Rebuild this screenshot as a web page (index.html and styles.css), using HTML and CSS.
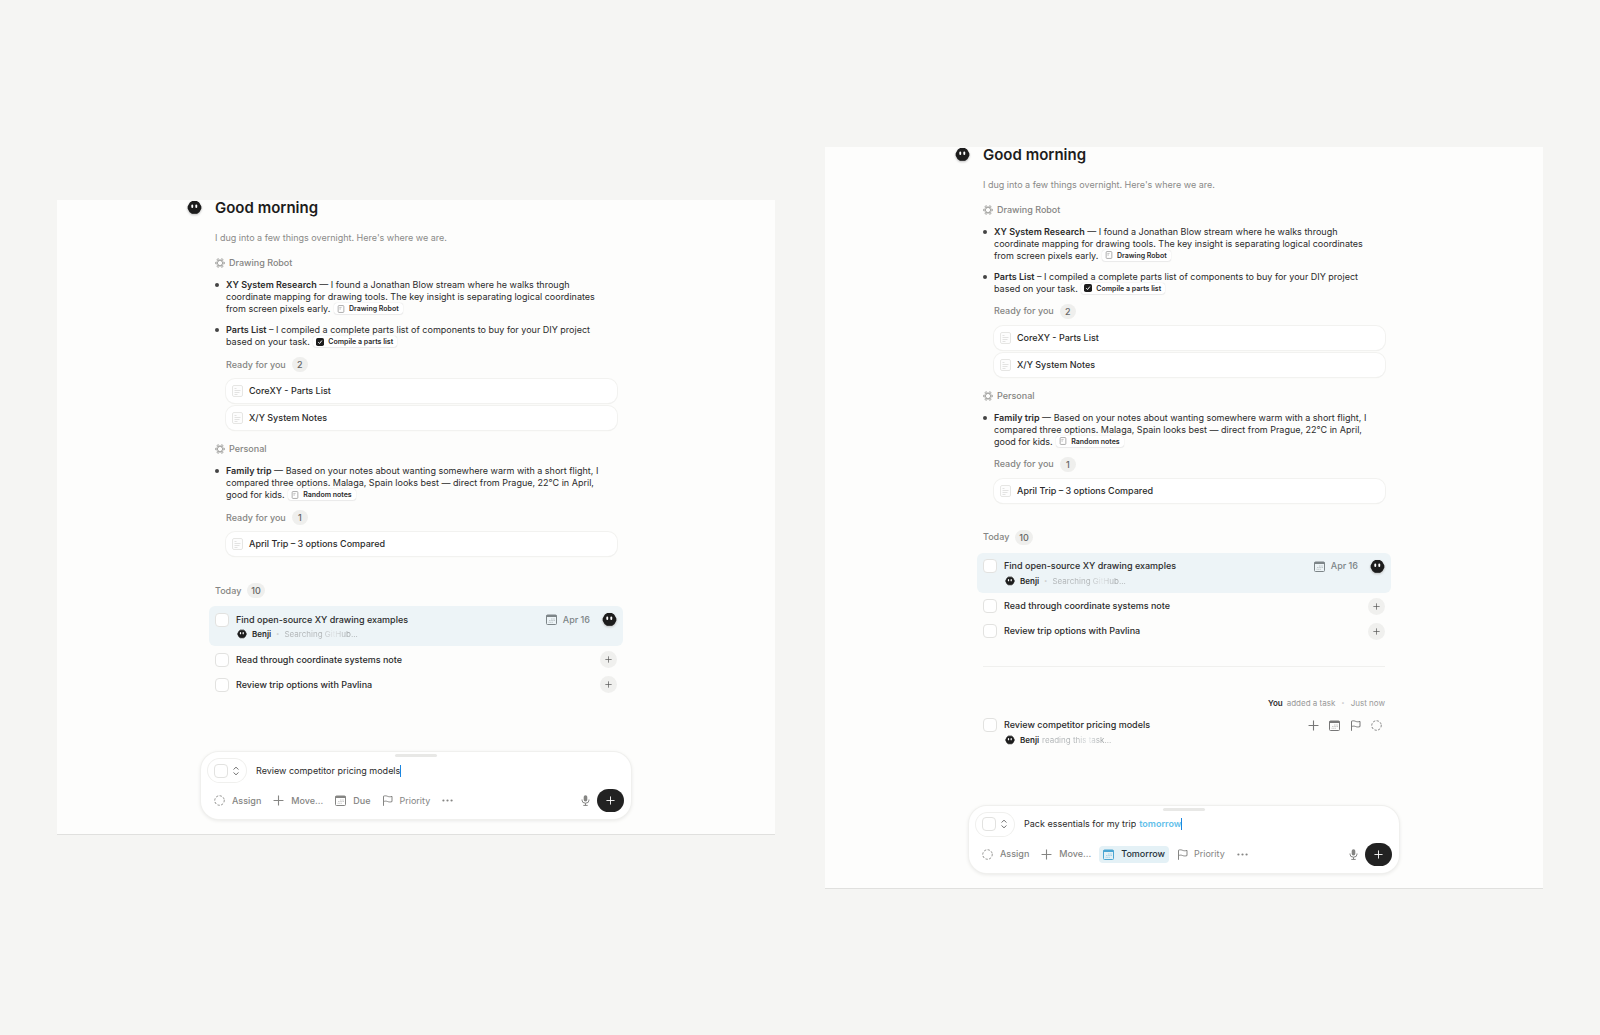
FILE: index.html
```html
<!DOCTYPE html>
<html lang="en">
<head>
    <meta charset="UTF-8">
    <meta name="viewport" content="width=device-width, initial-scale=1.0">
    <title>Good morning</title>
    <link rel="stylesheet" href="styles.css">
</head>
<body>

<!-- shared icons -->
<svg class="sprite" aria-hidden="true">
    <symbol id="i-benji" viewBox="0 0 16 16">
        <path d="M5.500 1.800h5l2 1.400L14.600 7v2l-2 3.600-2.100 1.400h-5l-2.100-1.400L1.400 9V7l2.100-3.800z" fill="#1d1d1d" stroke="#1d1d1d" stroke-width="1.400" stroke-linejoin="round"/>
        <rect x="4.600" y="4.800" width="2" height="3.600" rx="1" fill="#fff"/>
        <rect x="8.900" y="4.800" width="2" height="3.600" rx="1" fill="#fff"/>
    </symbol>
    <symbol id="i-project" viewBox="0 0 16 16">
        <g fill="none" stroke="currentColor" stroke-width="1.300">
            <circle cx="8" cy="8" r="4.200"/>
            <circle cx="5" cy="2.900" r="1.700"/>
            <circle cx="11" cy="2.900" r="1.700"/>
            <circle cx="14" cy="8" r="1.500"/>
            <circle cx="11" cy="13.100" r="1.700"/>
            <circle cx="5" cy="13.100" r="1.700"/>
            <circle cx="2" cy="8" r="1.500"/>
        </g>
    </symbol>
    <symbol id="i-note" viewBox="0 0 12 14">
        <rect x="1" y="1" width="10" height="12" rx="1.500" fill="#fff" stroke="currentColor" stroke-width="1.400"/>
        <path d="M3 4.500h4M3 7h3" fill="none" stroke="currentColor"/>
    </symbol>
    <symbol id="i-doc" viewBox="0 0 11 12">
        <rect x=".5" y=".5" width="10" height="11" rx="1.500" fill="#fdfdfd" stroke="#e6e6e4"/>
        <path d="M2.500 3.500h2M2.500 5.500h6M2.500 7.500h5M2.500 9.500h3" fill="none" stroke="#dcdcda" stroke-width=".8"/>
    </symbol>
    <symbol id="i-done" viewBox="0 0 9 9">
        <rect width="9" height="9" rx="2" fill="#1d1d1d"/>
        <path d="M2.500 4.700l1.500 1.500 2.600-3.300" fill="none" stroke="#fff" stroke-width="1.100"/>
    </symbol>
    <symbol id="i-calendar" viewBox="0 0 11 11">
        <rect x=".5" y="1" width="10" height="9.500" rx="1" fill="none" stroke="currentColor"/>
        <path d="M.5 2h10" stroke="currentColor" stroke-width="2"/>
        <path d="M5 5h4M3 6.500h6M2.500 8.300h4.500" stroke="currentColor" stroke-width=".8" stroke-dasharray="1.200 .4" opacity=".5"/>
    </symbol>
    <symbol id="i-flag" viewBox="0 0 11 11">
        <path d="M1.500 10.800V1.200c1.500-.6 2.800-.4 4 .1s2.700.7 4.500.1v5.200c-1.800.6-3.200.4-4.500-.1s-2.500-.5-4 .1" fill="none" stroke="currentColor"/>
    </symbol>
    <symbol id="i-assign" viewBox="0 0 12 12">
        <circle cx="6" cy="6" r="5.200" fill="none" stroke="currentColor" stroke-width="1" stroke-linecap="round" stroke-dasharray="1.600 2.480"/>
    </symbol>
    <symbol id="i-plus" viewBox="0 0 10 10">
        <path d="M5 .5v9M.5 5h9" fill="none" stroke="currentColor"/>
    </symbol>
    <symbol id="i-sort" viewBox="0 0 8 10">
        <path d="M1.500 3.500L4 1.200l2.500 2.300M1.500 6.500L4 8.800l2.500-2.300" fill="none" stroke="currentColor"/>
    </symbol>
    <symbol id="i-mic" viewBox="0 0 9 11">
        <rect x="2.700" y=".2" width="3.600" height="6.300" rx="1.800" fill="currentColor"/>
        <path d="M1 4.500v.7a3.500 3 0 0 0 7 0v-.7M4.500 8.200v2.300M2.300 10.400h4.400" fill="none" stroke="currentColor" stroke-width="1"/>
    </symbol>
    <symbol id="i-more" viewBox="0 0 10 4">
        <g fill="currentColor">
            <circle cx="1.300" cy="2" r="1"/>
            <circle cx="5" cy="2" r="1"/>
            <circle cx="8.700" cy="2" r="1"/>
        </g>
    </symbol>
</svg>

<main class="board">

    <!-- before adding a task -->
    <section class="panel">
        <div class="feed">
            <header class="greeting">
                <svg class="avatar greeting-avatar"><use href="#i-benji"/></svg>
                <h1>Good morning</h1>
            </header>
            <p class="intro">I dug into a few things overnight. Here's where we are.</p>

            <h2 class="project"><svg><use href="#i-project"/></svg>Drawing Robot</h2>
            <ul class="updates">
                <li><strong>XY System Research</strong> — I found a Jonathan Blow stream where he walks through coordinate mapping for drawing tools. The key insight is separating logical coordinates from screen pixels early. <a class="chip" href="#"><svg><use href="#i-note"/></svg>Drawing Robot</a></li>
                <li><strong>Parts List</strong> – I compiled a complete parts list of components to buy for your DIY project based on your task. <a class="chip" href="#"><svg><use href="#i-done"/></svg>Compile a parts list</a></li>
            </ul>
            <div class="ready">
                <h3 class="label">Ready for you <span class="count">2</span></h3>
                <a class="card" href="#"><svg><use href="#i-doc"/></svg>CoreXY - Parts List</a>
                <a class="card" href="#"><svg><use href="#i-doc"/></svg>X/Y System Notes</a>
            </div>

            <h2 class="project"><svg><use href="#i-project"/></svg>Personal</h2>
            <ul class="updates">
                <li><strong>Family trip</strong> — Based on your notes about wanting somewhere warm with a short flight, I compared three options. Malaga, Spain looks best — direct from Prague, 22°C in April, good for kids. <a class="chip" href="#"><svg><use href="#i-note"/></svg>Random notes</a></li>
            </ul>
            <div class="ready">
                <h3 class="label">Ready for you <span class="count">1</span></h3>
                <a class="card" href="#"><svg><use href="#i-doc"/></svg>April Trip – 3 options Compared</a>
            </div>

            <h3 class="label today">Today <span class="count">10</span></h3>
            <div class="task active">
                <div class="task-row">
                    <input type="checkbox" id="a1">
                    <label for="a1">Find open-source XY drawing examples</label>
                    <span class="due"><svg><use href="#i-calendar"/></svg>Apr 16</span>
                    <svg class="avatar"><use href="#i-benji"/></svg>
                </div>
                <p class="status"><svg class="mini"><use href="#i-benji"/></svg><b>Benji</b><i>•</i><span class="shimmer">Searching GitHub...</span></p>
            </div>
            <div class="task">
                <div class="task-row">
                    <input type="checkbox" id="a2">
                    <label for="a2">Read through coordinate systems note</label>
                    <button class="add" aria-label="Assign"><svg><use href="#i-plus"/></svg></button>
                </div>
            </div>
            <div class="task">
                <div class="task-row">
                    <input type="checkbox" id="a3">
                    <label for="a3">Review trip options with Pavlina</label>
                    <button class="add" aria-label="Assign"><svg><use href="#i-plus"/></svg></button>
                </div>
            </div>
        </div>

        <form class="composer">
            <span class="handle"></span>
            <div class="entry">
                <button type="button" class="type" aria-label="Type"><span class="box"></span><svg><use href="#i-sort"/></svg></button>
                <input type="text" aria-label="New task" value="Review competitor pricing models"><span class="caret"></span>
            </div>
            <div class="tools">
                <button type="button"><svg><use href="#i-assign"/></svg>Assign</button>
                <button type="button"><svg><use href="#i-plus"/></svg>Move...</button>
                <button type="button"><svg><use href="#i-calendar"/></svg>Due</button>
                <button type="button" class="priority"><svg><use href="#i-flag"/></svg>Priority</button>
                <button type="button" aria-label="More"><svg><use href="#i-more"/></svg></button>
                <button type="button" class="mic" aria-label="Dictate"><svg><use href="#i-mic"/></svg></button>
                <button type="button" class="send" aria-label="Add task"><svg><use href="#i-plus"/></svg></button>
            </div>
        </form>
    </section>

    <!-- after adding a task -->
    <section class="panel">
        <div class="feed">
            <header class="greeting">
                <svg class="avatar greeting-avatar"><use href="#i-benji"/></svg>
                <h1>Good morning</h1>
            </header>
            <p class="intro">I dug into a few things overnight. Here's where we are.</p>

            <h2 class="project"><svg><use href="#i-project"/></svg>Drawing Robot</h2>
            <ul class="updates">
                <li><strong>XY System Research</strong> — I found a Jonathan Blow stream where he walks through coordinate mapping for drawing tools. The key insight is separating logical coordinates from screen pixels early. <a class="chip" href="#"><svg><use href="#i-note"/></svg>Drawing Robot</a></li>
                <li><strong>Parts List</strong> – I compiled a complete parts list of components to buy for your DIY project based on your task. <a class="chip" href="#"><svg><use href="#i-done"/></svg>Compile a parts list</a></li>
            </ul>
            <div class="ready">
                <h3 class="label">Ready for you <span class="count">2</span></h3>
                <a class="card" href="#"><svg><use href="#i-doc"/></svg>CoreXY - Parts List</a>
                <a class="card" href="#"><svg><use href="#i-doc"/></svg>X/Y System Notes</a>
            </div>

            <h2 class="project"><svg><use href="#i-project"/></svg>Personal</h2>
            <ul class="updates">
                <li><strong>Family trip</strong> — Based on your notes about wanting somewhere warm with a short flight, I compared three options. Malaga, Spain looks best — direct from Prague, 22°C in April, good for kids. <a class="chip" href="#"><svg><use href="#i-note"/></svg>Random notes</a></li>
            </ul>
            <div class="ready">
                <h3 class="label">Ready for you <span class="count">1</span></h3>
                <a class="card" href="#"><svg><use href="#i-doc"/></svg>April Trip – 3 options Compared</a>
            </div>

            <h3 class="label today">Today <span class="count">10</span></h3>
            <div class="task active">
                <div class="task-row">
                    <input type="checkbox" id="b1">
                    <label for="b1">Find open-source XY drawing examples</label>
                    <span class="due"><svg><use href="#i-calendar"/></svg>Apr 16</span>
                    <svg class="avatar"><use href="#i-benji"/></svg>
                </div>
                <p class="status"><svg class="mini"><use href="#i-benji"/></svg><b>Benji</b><i>•</i><span class="shimmer">Searching GitHub...</span></p>
            </div>
            <div class="task">
                <div class="task-row">
                    <input type="checkbox" id="b2">
                    <label for="b2">Read through coordinate systems note</label>
                    <button class="add" aria-label="Assign"><svg><use href="#i-plus"/></svg></button>
                </div>
            </div>
            <div class="task">
                <div class="task-row">
                    <input type="checkbox" id="b3">
                    <label for="b3">Review trip options with Pavlina</label>
                    <button class="add" aria-label="Assign"><svg><use href="#i-plus"/></svg></button>
                </div>
            </div>

            <hr>
            <p class="activity"><b>You</b><span>added a task</span><i>•</i><span>Just now</span></p>
            <div class="task added">
                <div class="task-row">
                    <input type="checkbox" id="b4">
                    <label for="b4">Review competitor pricing models</label>
                    <div class="actions">
                        <button aria-label="Move"><svg><use href="#i-plus"/></svg></button>
                        <button aria-label="Due"><svg><use href="#i-calendar"/></svg></button>
                        <button aria-label="Priority"><svg><use href="#i-flag"/></svg></button>
                        <button aria-label="Assign"><svg><use href="#i-assign"/></svg></button>
                    </div>
                </div>
                <p class="status"><svg class="mini"><use href="#i-benji"/></svg><b>Benji</b><span class="shimmer">reading this task...</span></p>
            </div>
        </div>

        <form class="composer">
            <span class="handle"></span>
            <div class="entry">
                <button type="button" class="type" aria-label="Type"><span class="box"></span><svg><use href="#i-sort"/></svg></button>
                <input type="text" aria-label="New task" value="Pack essentials for my trip"><span class="date-word">tomorrow</span><span class="caret"></span>
            </div>
            <div class="tools">
                <button type="button"><svg><use href="#i-assign"/></svg>Assign</button>
                <button type="button"><svg><use href="#i-plus"/></svg>Move...</button>
                <button type="button" class="selected"><svg><use href="#i-calendar"/></svg>Tomorrow</button>
                <button type="button" class="priority"><svg><use href="#i-flag"/></svg>Priority</button>
                <button type="button" aria-label="More"><svg><use href="#i-more"/></svg></button>
                <button type="button" class="mic" aria-label="Dictate"><svg><use href="#i-mic"/></svg></button>
                <button type="button" class="send" aria-label="Add task"><svg><use href="#i-plus"/></svg></button>
            </div>
        </form>
    </section>

</main>

</body>
</html>
```
FILE: styles.css
```css
* {
    box-sizing: border-box;
}
body {
    margin: 0;
    background: #f5f5f3;
    color: #2b2b2b;
    font-family: Inter, "Liberation Sans", sans-serif;
    font-size: 9px;
    line-height: 12px;
}
h1, h2, h3, p, ul {
    margin: 0;
    padding: 0;
}
button {
    border: 0;
    padding: 0;
    background: none;
    color: inherit;
    font: inherit;
}
a {
    color: inherit;
    text-decoration: none;
}
svg {
    display: block;
    flex: none;
    width: 11px;
    height: 11px;
}
.sprite {
    position: absolute;
    width: 0;
    height: 0;
}

/* panels */
.board {
    display: flex;
    align-items: center;
    gap: 50px;
    min-height: 100vh;
    padding: 0 57px;
}
.panel {
    flex: 1;
    padding: 0 20px 15px;
    background: #fdfdfc;
    border-bottom: 1px solid #e0e0de;
}
.feed {
    max-width: 402px;
    margin: 0 auto;
}

/* greeting */
.greeting {
    position: relative;
}
.avatar {
    width: 15px;
    height: 15px;
    filter: drop-shadow(0 1px 1px #bbb);
}
.greeting-avatar {
    position: absolute;
    left: -28px;
    top: 0;
}
h1 {
    font-size: 15px;
    line-height: 16px;
    font-weight: 600;
    color: #1d1d1d;
}
.intro {
    margin-top: 16px;
    color: #8a8a88;
}

/* updates */
.project {
    display: flex;
    align-items: center;
    gap: 4px;
    margin: 13px 0 10px;
    font-size: 9px;
    font-weight: 500;
    color: #858583;
}
.project svg {
    width: 10px;
    height: 10px;
    color: #9a9a98;
}
.updates {
    list-style: none;
}
.updates li {
    position: relative;
    padding: 0 9px 0 11px;
}
.updates li + li {
    margin-top: 9px;
}
.updates li::before {
    content: "";
    position: absolute;
    left: 0;
    top: 4px;
    width: 4px;
    height: 4px;
    border-radius: 50%;
    background: #444;
}
strong {
    font-weight: 600;
}
.chip {
    display: inline-flex;
    align-items: center;
    gap: 4px;
    height: 11px;
    margin-left: 1px;
    padding: 0 4px 0 3px;
    border-radius: 3px;
    background: #fff;
    box-shadow: 0 0 1px #ccc, 0 1px 1px #eee;
    font-size: 7px;
    line-height: 11px;
    font-weight: 600;
    vertical-align: top;
}
.chip svg {
    width: 8px;
    height: 8px;
    color: #999;
}
.ready {
    display: flex;
    flex-direction: column;
    gap: 3px;
    margin: 9px 0 13px 11px;
}
.label {
    display: flex;
    align-items: center;
    gap: 6px;
    height: 15px;
    font-size: 9px;
    font-weight: 500;
    color: #858583;
}
.ready .label {
    margin-bottom: 4px;
}
.count {
    min-width: 16px;
    padding: 0 4px;
    border-radius: 8px;
    background: #efefed;
    line-height: 15px;
    text-align: center;
    color: #666;
}
.card {
    display: flex;
    align-items: center;
    gap: 6px;
    height: 24px;
    padding-left: 6px;
    border-radius: 9px;
    background: #fff;
    box-shadow: 0 0 0 1px #f2f2f0, 0 1px 1px #e4e4e2;
    font-weight: 500;
}
.card svg {
    height: 12px;
}

/* tasks */
.today {
    margin: 27px 0 8px;
}
.task {
    margin: 0 -6px;
    padding: 5px 6px;
    border-radius: 6px;
}
.task.active {
    margin-bottom: 1px;
    padding: 6px 6px 7px;
    background: #edf4f7;
}
.task-row {
    display: flex;
    align-items: center;
    height: 15px;
    font-weight: 500;
}
.task-row input, .box {
    appearance: none;
    flex: none;
    width: 14px;
    height: 14px;
    margin: 0 7px 0 0;
    border: 1px solid #e2e2e0;
    border-radius: 4px;
    background: #fff;
}
.task-row label {
    flex: 1;
}
.due {
    display: flex;
    align-items: center;
    gap: 6px;
    margin-right: 12px;
    color: #7d8588;
}
.add {
    display: grid;
    place-items: center;
    width: 17px;
    height: 17px;
    border-radius: 50%;
    background: #f0f0ee;
    color: #555;
}
.add svg {
    width: 7px;
    height: 7px;
}
.status {
    display: flex;
    align-items: center;
    gap: 3px;
    margin-top: 2px;
    padding-left: 22px;
    font-size: 8px;
    line-height: 10px;
}
.status .mini {
    width: 10px;
    height: 10px;
    margin-right: 2px;
}
.status b, .activity b {
    font-weight: 600;
}
.status i, .activity i {
    margin: 0 2px;
    font-size: 6px;
    font-style: normal;
    color: #ccc;
}
.shimmer {
    background: linear-gradient(90deg, #b0b4b6 50%, #e2e6e8 68%, #a0a4a6 85%);
    background-clip: text;
    color: transparent;
}
hr {
    height: 1px;
    margin: 22px 0 30px;
    border: 0;
    background: #f0f0ee;
}
.activity {
    display: flex;
    justify-content: flex-end;
    gap: 4px;
    font-size: 8px;
    color: #999;
}
.activity b {
    color: #2b2b2b;
}
.added {
    margin-top: 4px;
    padding-bottom: 6px;
}
.actions {
    display: flex;
    gap: 10px;
    margin-right: 3px;
    color: #777;
}

/* composer */
.composer {
    position: relative;
    display: flex;
    flex-direction: column;
    gap: 7px;
    max-width: 430px;
    margin: 55px auto 0;
    padding: 7px;
    border-radius: 18px;
    background: #fff;
    box-shadow: 0 0 0 1px #f0f0ee, 0 1px 4px #e0e0de;
}
.handle {
    position: absolute;
    top: 2px;
    left: 50%;
    width: 42px;
    height: 3px;
    margin-left: -21px;
    border-radius: 2px;
    background: #e8e8e6;
}
.entry {
    display: flex;
    align-items: center;
}
.type {
    display: flex;
    align-items: center;
    width: 38px;
    height: 23px;
    margin-right: 10px;
    padding-left: 6px;
    border-radius: 12px;
    box-shadow: 0 0 0 1px #f0f0ee;
    color: #777;
}
.type .box {
    margin-right: 4px;
}
.type svg {
    width: 8px;
    height: 10px;
}
.entry input {
    field-sizing: content;
    border: 0;
    padding: 0;
    outline: 0;
    background: none;
    color: inherit;
    font: inherit;
}
.date-word {
    margin-left: 3px;
    color: #62c0ea;
    font-weight: 600;
}
.caret {
    width: 1px;
    height: 12px;
    background: #1b86e0;
}
.tools {
    display: flex;
    align-items: center;
    gap: 4px;
    padding-left: 2px;
    color: #858583;
    font-weight: 500;
}
.tools button {
    display: flex;
    align-items: center;
    gap: 7px;
    height: 17px;
    padding: 0 4px;
    border-radius: 4px;
}
.tools .priority {
    gap: 6px;
    font-weight: 400;
}
.tools .selected {
    background: #e4f1f6;
    color: #1f3038;
}
.selected svg {
    color: #4ba6d3;
}
.tools .mic {
    margin: 0 2px 0 auto;
    padding: 0;
}
.tools .send {
    justify-content: center;
    width: 27px;
    height: 23px;
    border-radius: 12px;
    background: #222;
    color: #fff;
}
.send svg {
    width: 9px;
    height: 9px;
}
```
